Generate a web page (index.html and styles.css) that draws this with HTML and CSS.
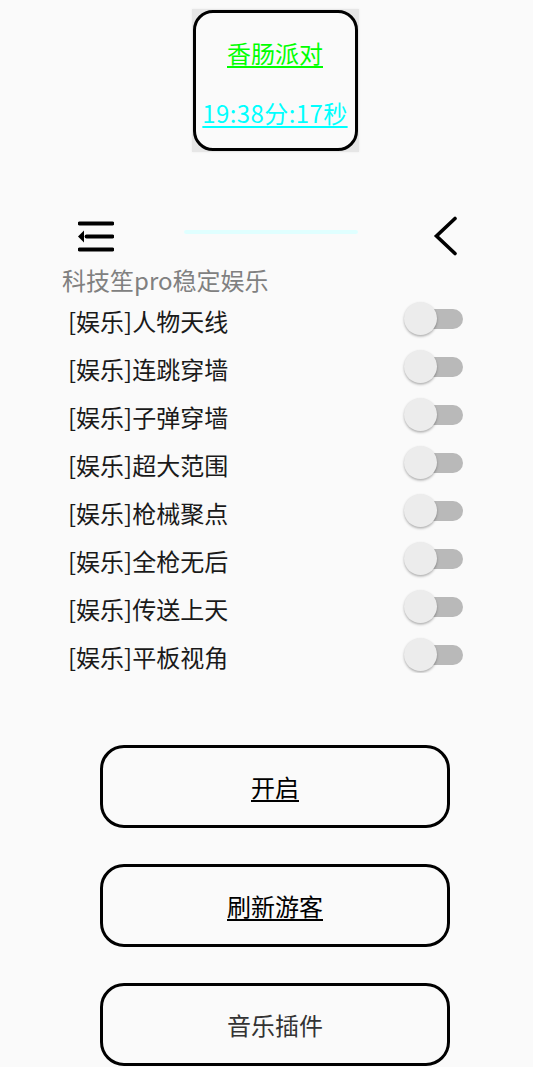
FILE: index.html
```html
<!DOCTYPE html>
<html lang="zh">
<head>
<meta charset="utf-8">
<title>香肠派对</title>
<link rel="stylesheet" href="styles.css">
</head>
<body>
<div class="page">
  <div class="top">
    <div class="card-shadow">
      <div class="card">
        <span class="title">香肠派对</span>
        <span class="time">19:38分:17秒</span>
      </div>
    </div>
  </div>

  <div class="header">
    <svg class="menu" width="36" height="32" viewBox="0 0 36 32">
      <line x1="1.5" y1="3.5" x2="34.5" y2="3.5" stroke="#000" stroke-width="3.8" stroke-linecap="round"/>
      <line x1="8.5" y1="16.5" x2="34.5" y2="16.5" stroke="#000" stroke-width="3.8" stroke-linecap="round"/>
      <line x1="1.5" y1="29.5" x2="34.5" y2="29.5" stroke="#000" stroke-width="3.8" stroke-linecap="round"/>
      <polygon points="0,16.5 6,10.5 6,22.5" fill="#000"/>
    </svg>
    <div class="bar"></div>
    <svg class="back" width="26" height="40" viewBox="0 0 26 40">
      <polyline points="22,2.5 3.5,20 22,37.5" fill="none" stroke="#000" stroke-width="3.6" stroke-linecap="round" stroke-linejoin="miter"/>
    </svg>
  </div>

  <div class="subtitle">科技笙pro稳定娱乐</div>

  <div class="list">
    <div class="row"><span class="label">[娱乐]人物天线</span><span class="switch"><span class="track"></span><span class="thumb"></span></span></div>
    <div class="row"><span class="label">[娱乐]连跳穿墙</span><span class="switch"><span class="track"></span><span class="thumb"></span></span></div>
    <div class="row"><span class="label">[娱乐]子弹穿墙</span><span class="switch"><span class="track"></span><span class="thumb"></span></span></div>
    <div class="row"><span class="label">[娱乐]超大范围</span><span class="switch"><span class="track"></span><span class="thumb"></span></span></div>
    <div class="row"><span class="label">[娱乐]枪械聚点</span><span class="switch"><span class="track"></span><span class="thumb"></span></span></div>
    <div class="row"><span class="label">[娱乐]全枪无后</span><span class="switch"><span class="track"></span><span class="thumb"></span></span></div>
    <div class="row"><span class="label">[娱乐]传送上天</span><span class="switch"><span class="track"></span><span class="thumb"></span></span></div>
    <div class="row"><span class="label">[娱乐]平板视角</span><span class="switch"><span class="track"></span><span class="thumb"></span></span></div>
  </div>

  <div class="buttons">
    <div class="btn"><span class="u">开启</span></div>
    <div class="btn"><span class="u">刷新游客</span></div>
    <div class="btn plain">音乐插件</div>
  </div>
</div>
</body>
</html>
```

FILE: styles.css
```css
html, body {
  margin: 0;
  padding: 0;
  background: #fafafa;
}
body {
  font-family: "Noto Sans CJK SC", "Noto Sans", sans-serif;
  width: 533px;
  height: 1067px;
  overflow: hidden;
}
.page {
  display: flex;
  flex-direction: column;
}
.top {
  display: flex;
  justify-content: center;
  padding-left: 17px;
  padding-top: 9px;
}
.card-shadow {
  width: 167px;
  height: 143px;
  background: #e6e6e6;
  display: flex;
  align-items: center;
  justify-content: center;
  box-shadow: 0 0 2px #ececec;
}
.card {
  box-sizing: border-box;
  width: 165px;
  height: 141px;
  border: 3px solid #000;
  border-radius: 20px;
  background: #fafafa;
  display: flex;
  flex-direction: column;
  align-items: center;
  padding-top: 25px;
  gap: 30px;
  font-size: 24px;
  line-height: 30px;
}
.title {
  color: #00ff00;
  text-decoration: underline;
  text-underline-offset: 3px;
}
.time {
  color: #00ffff;
  text-decoration: underline;
  text-underline-offset: 3px;
  letter-spacing: 0.4px;
}
.header {
  display: flex;
  align-items: center;
  height: 40px;
  margin-top: 64px;
  padding-left: 78px;
}
.bar {
  width: 174px;
  height: 4px;
  border-radius: 2px;
  background: #e0ffff;
  margin-left: 70px;
  margin-top: -8px;
}
.back {
  margin-left: 75px;
}
.subtitle {
  margin-top: 7px;
  padding-left: 62px;
  font-size: 24px;
  line-height: 34px;
  height: 34px;
  color: #808080;
}
.list {
  height: 376px;
  overflow: hidden;
  padding-left: 68px;
  margin-top: 0;
}
.row {
  display: flex;
  align-items: center;
  height: 48px;
  width: 396px;
  justify-content: space-between;
}
.label {
  font-size: 24px;
  color: #1a1a1a;
  line-height: 34px;
}
.switch {
  position: relative;
  width: 60px;
  height: 36px;
  margin-top: -4px;
}
.track {
  position: absolute;
  left: 6px;
  top: 8px;
  width: 53px;
  height: 20px;
  border-radius: 10px;
  background: #b9b9b9;
}
.thumb {
  position: absolute;
  left: 0;
  top: 1px;
  width: 33px;
  height: 33px;
  border-radius: 50%;
  background: #ececec;
  box-shadow: 0 1.5px 2.5px rgba(0,0,0,0.3);
}
.buttons {
  display: flex;
  flex-direction: column;
  gap: 36px;
  margin-top: 72px;
  padding-left: 100px;
}
.btn {
  box-sizing: border-box;
  width: 350px;
  height: 83px;
  border: 3px solid #000;
  border-radius: 24px;
  display: flex;
  align-items: center;
  justify-content: center;
  font-size: 24px;
  color: #000;
}
.u {
  text-decoration: underline;
  text-underline-offset: 3px;
}
.plain {
  color: #333;
}
```
